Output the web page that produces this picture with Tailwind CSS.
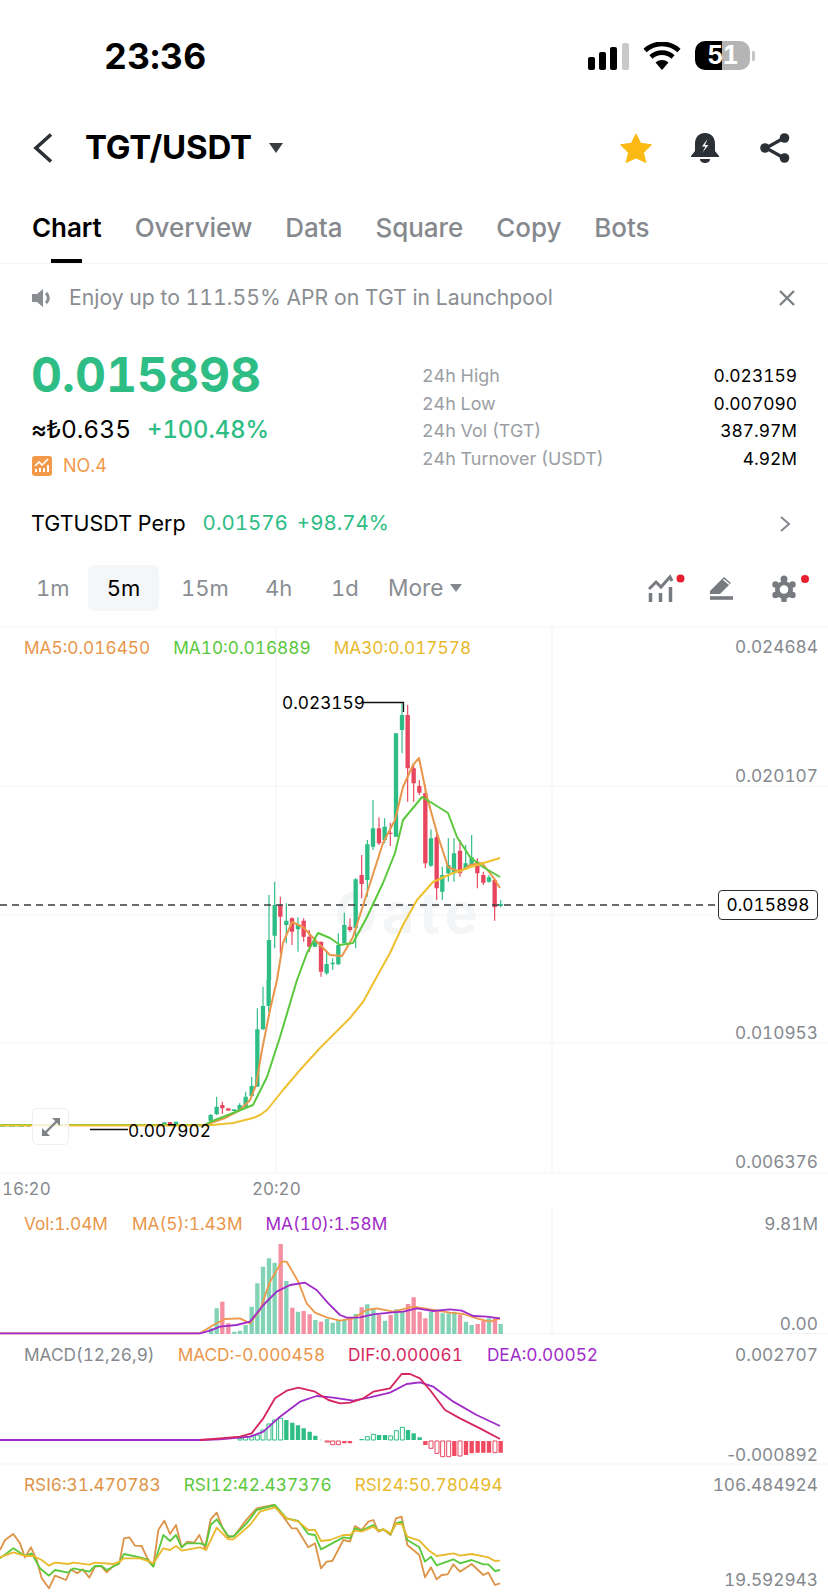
<!DOCTYPE html>
<html lang="en">
<head>
<meta charset="utf-8">
<title>TGT/USDT</title>
<script src="https://cdn.jsdelivr.net/npm/@tailwindcss/browser@4"></script>
</head>
<body class="bg-white">
<div class="w-[828px] h-[1592px] overflow-hidden bg-white font-['Inter','Noto_Sans',sans-serif] text-black tabular-nums">

  <!-- status bar -->
  <div class="h-[100px] flex items-start pt-[36px] relative">
    <span class="ml-[104px] text-[35.500px] leading-[41px] font-bold tracking-[0.2px]">23:36</span>
    <svg class="ml-auto mt-[7px]" width="42" height="27" viewBox="0 0 42 27"><rect x="0" y="14" width="7" height="13" rx="2"/><rect x="11" y="9" width="7" height="18" rx="2"/><rect x="22" y="4" width="7" height="23" rx="2"/><rect x="34" y="0" width="7" height="27" rx="2" fill="#c9c9c9"/></svg>
    <svg class="ml-[13px] mt-[6px]" width="38" height="28" viewBox="0 0 38 28"><path d="M19 28 12.500 20.500A10 10 0 0 1 25.500 20.500Z"/><path d="M8 15A16 16 0 0 1 30 15M2 8.500A25 25 0 0 1 36 8.500" fill="none" stroke="#000" stroke-width="4.600"/></svg>
    <div class="ml-[14px] mt-[5px] w-[55px] h-[29px] rounded-[10px] overflow-hidden flex relative">
      <div class="w-[27px] bg-black"></div><div class="flex-1 bg-[#b5b5b5]"></div>
      <span class="absolute inset-0 flex items-center justify-center text-white text-[25px] font-bold leading-none tracking-[-1px]">51</span>
    </div>
    <div class="ml-[2px] mr-[73px] mt-[15px] w-[3px] h-[10px] rounded-r-[2px] bg-[#c4c4c4]"></div>
  </div>

  <!-- header -->
  <div class="h-[95px] flex items-center pl-[33px] pr-[38px]">
    <svg width="20" height="30" viewBox="0 0 20 30"><path d="M18 1.500 3 15l15 13.500" fill="none" stroke="#2b2f36" stroke-width="3.600"/></svg>
    <span class="ml-[32px] text-[33px] font-bold leading-none tracking-[-0.2px]">TGT/USDT</span>
    <svg class="ml-[17px]" width="14" height="10" viewBox="0 0 14 10"><path d="M0 0h14L7 10Z" fill="#3a3d42"/></svg>
    <svg class="ml-auto" width="32" height="30" viewBox="0 0 34 31"><path d="M17 0.500 22 10.500 33.500 12 25 20.500 27.500 31 17 26 6.500 31 9 20.500 0.500 12 12 10.500Z" fill="#fcb813" stroke="#fcb813" stroke-linejoin="round"/></svg>
    <svg class="ml-[39px]" width="28" height="30" viewBox="0 0 28 30"><path d="M14 0C7 0 4 5 4 11V18L0 23V24H28V23L24 18V11C24 5 21 0 14 0Z" fill="#2b2f36"/><path d="M9 26H19C19 29 16 30 14 30 12 30 9 29 9 26Z" fill="#2b2f36"/><path d="M16.500 6 11 13.500H14.500L11.500 19.500 17.500 12H14Z" fill="#fff"/></svg>
    <svg class="ml-[41px]" width="30" height="30" viewBox="0 0 30 30"><path d="M24 5 6 15 24 25" fill="none" stroke="#2b2f36" stroke-width="3.200"/><circle cx="24.500" cy="5" r="4.800" fill="#2b2f36"/><circle cx="5" cy="15" r="4.800" fill="#2b2f36"/><circle cx="24.500" cy="25" r="4.800" fill="#2b2f36"/></svg>
  </div>

  <!-- tabs -->
  <div class="h-[69px] border-b border-[#f3f4f5] pl-[32px] flex gap-[33px] items-start pt-[16px] text-[26px] leading-[34px] text-[#85898e] font-medium tracking-[-0.05px]">
    <div class="relative text-black font-semibold">Chart<div class="absolute left-[19px] top-[48px] w-[31px] h-[4px] bg-black"></div></div>
    <span>Overview</span><span>Data</span><span>Square</span><span>Copy</span><span>Bots</span>
  </div>

  <!-- banner -->
  <div class="h-[68px] flex items-center pl-[32px] pr-[33px] text-[#8a8e93]">
    <svg width="20" height="18" viewBox="0 0 20 18"><path d="M0 5h5l6-5v18l-6-5H0Z" fill="#8a8e93"/><path d="M14 4a6.500 6.500 0 0 1 0 10" fill="none" stroke="#8a8e93" stroke-width="3"/></svg>
    <span class="ml-[17px] text-[21.200px] leading-none">Enjoy up to 111.55% APR on TGT in Launchpool</span>
    <svg class="ml-auto" width="16" height="16" viewBox="0 0 16 16"><path d="M1 1 15 15M15 1 1 15" stroke="#7d8185" stroke-width="2.400"/></svg>
  </div>

  <!-- price block -->
  <div class="h-[167px] flex pl-[31px] pr-[31px] pt-[18px]">
    <div class="w-[391px]">
      <div class="text-[48px] leading-[50px] font-bold text-[#2ebd85]">0.015898</div>
      <div class="mt-[14px] flex items-baseline text-[24.500px] leading-[30px]"><span class="font-['Noto_Sans','Inter',sans-serif] font-medium">≈₺<span class="font-['Inter',sans-serif] font-normal">0.635</span></span><span class="ml-[16px] text-[23.700px] text-[#2ebd85] font-medium">+100.48%</span></div>
      <div class="mt-[11px] flex items-center">
        <svg class="ml-[1px]" width="20" height="20" viewBox="0 0 20 20"><rect width="20" height="20" rx="3" fill="#f2994a"/><path d="M3 10 7 6l3 3 6-6" fill="none" stroke="#fff" stroke-width="1.600"/><path d="M4 16v-3M8 16v-4M12 16v-4M16 16V9" stroke="#fff" stroke-width="2"/></svg>
        <span class="ml-[11px] text-[18px] leading-none text-[#f2994a]">NO.4</span>
      </div>
    </div>
    <div class="flex-1 pt-[12px] text-[17.900px] leading-[27.700px] text-[#9a9ea3]">
      <div class="flex justify-between"><span>24h High</span><span class="text-black text-[17.400px]">0.023159</span></div>
      <div class="flex justify-between"><span>24h Low</span><span class="text-black text-[17.400px]">0.007090</span></div>
      <div class="flex justify-between"><span>24h Vol (TGT)</span><span class="text-black text-[17.400px]">387.97M</span></div>
      <div class="flex justify-between"><span>24h Turnover (USDT)</span><span class="text-black text-[17.400px]">4.92M</span></div>
    </div>
  </div>

  <!-- perp -->
  <div class="h-[49px] flex items-center pl-[31px] pr-[37px] text-[21.500px]">
    <span>TGTUSDT Perp</span>
    <span class="ml-[17px] text-[20.500px] text-[#2ebd85]">0.01576</span>
    <span class="ml-[9px] text-[20.500px] text-[#2ebd85]">+98.74%</span>
    <svg class="ml-auto" width="12" height="18" viewBox="0 0 12 18"><path d="M2 2l8 7-8 7" fill="none" stroke="#85898e" stroke-width="2"/></svg>
  </div>

  <!-- interval row -->
  <div class="h-[46px] mt-[17px] flex items-center pl-[36px] text-[22px] text-[#8a8e93]">
    <span class="w-[52px]">1m</span>
    <span class="w-[71px] h-[46px] flex items-center justify-center rounded-[6px] bg-[#f5f6f7] text-black">5m</span>
    <span class="ml-[22px] w-[84px]">15m</span>
    <span class="w-[66px]">4h</span>
    <span class="w-[57px]">1d</span>
    <span class="text-[22.700px]">More</span>
    <svg class="ml-[6px]" width="12" height="8" viewBox="0 0 12 8"><path d="M0 0h12L6 8Z" fill="#85898e"/></svg>
    <svg class="ml-[186px]" width="40" height="28" viewBox="0 0 40 28"><path d="M1 15 8 8l5 5 9-10 2 4" fill="none" stroke="#777b80" stroke-width="3"/><path d="M2.500 19v9M12.500 19v9M22.500 13v15" stroke="#777b80" stroke-width="3.500"/><circle cx="32.500" cy="4.500" r="4" fill="#e51f2e"/></svg>
    <svg class="ml-[21px]" width="26" height="24" viewBox="0 0 26 24"><path d="M1 15 15 1l7 6-11 11H1Z" fill="#777b80"/><path d="M14.500 3.500l6 5" stroke="#fff" stroke-width="1.500"/><path d="M1 22h23" stroke="#777b80" stroke-width="3.600"/></svg>
    <svg class="ml-[37px]" width="41" height="28" viewBox="0 0 41 28"><g fill="#777b80"><circle cx="12" cy="16" r="9"/><circle cx="12" cy="5" r="3.500"/><circle cx="12" cy="26" r="2.800"/><circle cx="3.500" cy="10.500" r="3.200"/><circle cx="20.500" cy="10.500" r="3.200"/><circle cx="3.500" cy="21" r="3.200"/><circle cx="20.500" cy="21" r="3.200"/></g><circle cx="12" cy="15.500" r="4.300" fill="#fff"/><circle cx="33" cy="5" r="4" fill="#e51f2e"/></svg>
  </div>

  <!-- main chart : y 626..1210 -->
  <div class="relative h-[584px] mt-[15px]">
    <svg class="absolute inset-0" width="828" height="584" viewBox="0 626 828 584">
      <path d="M0 627H828M0 786H828M0 915H716M0 1043H828M0 1173H828M552 626V1173M276 626V1173" stroke="#f8f8f9" stroke-width="1.500" fill="none"/>
      <text x="335" y="933" font-family="Inter" font-weight="700" font-size="56" letter-spacing="5" fill="#f4f5f6">Gate</text>
      <!-- candles upper -->
      <g transform="translate(240 680) scale(.33333)" fill="none">
        <path stroke="#2ebd85" stroke-width="3.500" d="M87 645V900M104 605V805M139 670V790M174 712V815M225 770V800M260 815V885M278 835V870M295 760V855M313 698V790M347 595V805M382 480V650M399 360V510M434 415V490M468 160V470M486 70V220M573 448V560M607 560V660M625 475V605M642 475V605M677 495V570M695 465V555M747 585V608M782 660V682"/>
        <path stroke="#2ebd85" stroke-width="13" d="M87 780V900M104 675V767M139 722V735M174 735V748M225 780V800M260 852V880M278 848V853M295 795V853M313 735V790M347 598V743M382 493V600M399 445V500M434 440V480M468 160V470M486 105V150M573 475V557M607 585V635M625 555V580M642 520V580M677 550V565M695 532V555M747 592V605M782 672V678"/>
        <path stroke="#e8465f" stroke-width="3.500" d="M121 650V820M156 712V795M191 715V785M208 750V815M243 785V890M330 715V755M365 525V655M417 412V495M451 428V498M503 75V365M521 255V365M538 300V345M556 315V565M590 460V660M660 480V590M712 535V625M730 575V615M764 595V722"/>
        <path stroke="#e8465f" stroke-width="13" d="M121 675V710M156 715V755M191 722V770M208 770V800M243 785V875M330 740V750M365 585V612M417 445V490M451 458V462M503 105V265M521 265V310M538 318V338M556 340V550M590 472V625M660 512V580M712 545V580M730 585V608M764 600V682"/>
      </g>
      <!-- candles lower -->
      <g transform="translate(0 980) scale(.33333)" fill="none">
        <path stroke="#2ebd85" stroke-width="3.500" d="M806 0V95M789 20V150M772 85V320M755 290V350M737 335V382M719 370V392M650 350V405M632 402V425"/>
        <path stroke="#2ebd85" stroke-width="13" d="M806 0V78M789 78V148M772 148V320M755 318V348M737 350V380M719 375V392M702 388V393M650 380V403M632 405V422M528 425V434M493 427V434"/>
        <path stroke="#e8465f" stroke-width="3.500" d="M667 365V402"/>
        <path stroke="#e8465f" stroke-width="13" d="M667 375V385M685 385V392M510 426V434"/>
      </g>
      <!-- dashed price -->
      <path d="M0 905H717" stroke="#3a3d42" stroke-width="1.300" stroke-dasharray="7 5"/>
      <!-- flat-run noise -->
      <path d="M0 1125.500H30" stroke="#2ebd85" stroke-width="2.500" stroke-dasharray="6 3"/>
      <path d="M14 1125H32" stroke="#e8465f" stroke-width="1.500" stroke-dasharray="5 6"/>
      <!-- MAs -->
      <path fill="none" stroke="#e9964a" stroke-width="2" stroke-linejoin="round" d="M0 1125H205L225 1118 240 1110 250 1100 256 1085 262 1050 270 1010 277 980 283 943 292 922 303 927 317 942 330 955 342 956 353 937 367 893 383 843 395 820 403 787 413 765 419 758 427 797 437 833 448 867 460 872 470 865 482 863 493 877 500 888"/>
      <path fill="none" stroke="#5ac83c" stroke-width="2" stroke-linejoin="round" d="M0 1125H205L210 1122 233 1113 253 1105 267 1077 280 1037 297 980 307 953 318 933 330 938 340 945 353 943 367 917 383 883 395 853 403 820 413 808 422 797 432 803 448 813 457 837 470 857 483 867 500 877"/>
      <path fill="none" stroke="#efc02f" stroke-width="2" stroke-linejoin="round" d="M0 1125.500H207L233 1123 253 1118 260 1115 267 1110 283 1090 300 1070 320 1048 350 1018 363 1002 375 980 390 953 403 925 417 900 433 882 453 873 477 865 500 858"/>
      <!-- high/low markers -->
      <path d="M363 702.500H403.500V712" fill="none" stroke="#111" stroke-width="1.300"/>
      <path d="M90 1129.500H128" stroke="#111" stroke-width="1.300"/>
    </svg>

    <!-- legend -->
    <div class="relative flex pl-[24px] pt-[10px] text-[17.250px] leading-[24px] gap-[23px]">
      <span class="text-[#e9964a]">MA5:0.016450</span><span class="text-[#5ac83c]">MA10:0.016889</span><span class="text-[#e7b92c]">MA30:0.017578</span>
    </div>

    <!-- y axis -->
    <div class="absolute right-[10px] top-[9px] h-[539px] flex flex-col justify-between items-end text-[17.250px] leading-[24px] text-[#85898e]">
      <span>0.024684</span><span>0.020107</span>
      <span class="w-[100px] h-[30px] -my-[3px] border border-[#2b2f36] rounded-[4px] bg-white text-black flex items-center justify-center">0.015898</span>
      <span>0.010953</span><span>0.006376</span>
    </div>

    <!-- high/low labels -->
    <span class="absolute left-[282px] top-[65px] text-[17.250px] leading-[24px] text-black">0.023159</span>
    <span class="absolute left-[128px] top-[493px] text-[17.250px] leading-[24px] text-black">0.007902</span>

    <!-- expand -->
    <div class="absolute left-[32px] top-[482px] w-[37px] h-[37px] rounded-[5px] border border-[#eeeff0] bg-white/80 flex items-center justify-center">
      <svg width="20" height="20" viewBox="0 0 20 20"><path d="M3 17 17 3" stroke="#7f8387" stroke-width="2.400"/><path d="M11 1h8v8ZM1 11v8h8Z" fill="#7f8387"/></svg>
    </div>

    <!-- time axis -->
    <span class="absolute left-[2px] top-[551px] text-[17px] leading-[24px] text-[#85898e]">16:20</span>
    <span class="absolute left-[252px] top-[551px] text-[17px] leading-[24px] text-[#85898e]">20:20</span>
  </div>

  <!-- volume : y 1210..1340 -->
  <div class="relative h-[130px]">
    <svg class="absolute inset-0" width="828" height="130" viewBox="0 1210 828 130">
      <path d="M0 1333.500H828M552 1210V1333" stroke="#f3f4f5" stroke-width="1.200"/>
      <g transform="translate(200 1210) scale(.33333)" fill="none">
        <path stroke="#82d3b5" stroke-width="13" d="M33 355V372M50 295V372M103 365V372M120 362V372M137 345V372M155 290V372M172 220V372M189 170V372M207 145V372M224 158V372M259 213V372M294 305V372M346 330V372M381 327V372M398 338V372M415 330V372M433 330V372M467 312V372M502 283V372M520 295V372M555 332V372M589 298V372M607 302V372M693 305V372M728 310V372M746 310V372M763 305V372M798 335V372M815 345V372M867 325V372M902 342V372"/>
        <path stroke="#f490a1" stroke-width="13" d="M67 275V372M85 340V372M242 102V372M277 293V372M311 303V372M329 313V372M363 335V372M450 325V372M485 292V372M537 315V372M572 315V372M624 282V372M641 262V372M659 305V372M676 325V372M711 305V372M780 315V372M833 342V372M850 332V372M885 325V372"/>
        <path stroke="#ee9a4d" stroke-width="5.500" stroke-linejoin="round" d="M-600 370H0L40 345 75 327 120 325 150 340 180 300 210 215 245 155 260 155 295 215 320 280 345 308 380 322 420 332 460 325 500 300 530 295 580 305 640 290 700 300 750 308 790 312 830 325 870 335 900 325"/>
        <path stroke="#a12bc8" stroke-width="5.500" stroke-linejoin="round" d="M-600 370H0L30 362 60 350 110 345 150 335 190 285 230 245 270 225 315 218 350 240 385 280 420 315 440 323 480 322 520 313 570 308 610 305 650 295 700 303 750 298 785 302 820 318 860 320 900 325"/>
      </g>
    </svg>
    <div class="relative flex pl-[24px] pt-[2px] text-[17.250px] leading-[24px]">
      <span class="text-[#e9964a]">Vol:1.04M</span><span class="ml-[24px] text-[#e9964a]">MA(5):1.43M</span><span class="ml-[23px] text-[#a12bc8]">MA(10):1.58M</span>
    </div>
    <span class="absolute right-[10px] top-[2px] text-[17.250px] leading-[24px] text-[#85898e]">9.81M</span>
    <span class="absolute right-[10px] top-[102px] text-[17.250px] leading-[24px] text-[#85898e]">0.00</span>
  </div>

  <!-- MACD : y 1340..1465 -->
  <div class="relative h-[125px]">
    <svg class="absolute inset-0" width="828" height="125" viewBox="0 1340 828 125">
      <path d="M0 1464H828" stroke="#f3f4f5" stroke-width="1.200"/>
      <g transform="translate(200 1340) scale(.33333)" fill="none">
        <path stroke="#2ebd85" stroke-width="13" d="M259 240V300M277 248V300M294 256V300M311 265V300M329 275V300M346 287V300M485 297V301M537 285V300M555 285V300M624 270V300M641 280V300M659 292V300"/>
        <path stroke="#2ebd85" stroke-width="3" d="M114 295h12v5h-12zM131 292h12v8h-12zM149 290h12v10h-12zM166 285h12v15h-12zM183 270h12v30h-12zM201 252h12v48h-12zM218 240h12v60h-12zM236 235h12v65h-12zM496 290h12v10h-12zM514 283h12v17h-12zM566 288h12v12h-12zM583 272h12v28h-12zM601 262h12v38h-12zM363 299V301"/>
        <path stroke="#f04a63" stroke-width="13" d="M433 303V310M450 303V310M676 303V315M763 303V348M798 303V345M815 303V340M833 303V338M850 303V338M867 303V338M902 303V338"/>
        <path stroke="#e8465f" stroke-width="3" d="M375 303h14v3h-14zM392 303h12v11h-12zM409 303h12v11h-12zM687 303h12v22h-12zM705 303h12v37h-12zM722 303h12v47h-12zM740 303h12v47h-12zM774 303h12v45h-12zM879 303h12v35h-12z"/>
        <path stroke="#a12bc8" stroke-width="5.500" stroke-linejoin="round" d="M-600 300H0L60 298 150 290 190 275 240 230 300 185 350 168 400 173 460 182 510 172 570 158 620 132 660 127 700 140 760 185 830 225 900 258"/>
        <path stroke="#d6265f" stroke-width="5.500" stroke-linejoin="round" d="M0 300 60 295 120 290 155 280 190 235 225 175 260 152 295 143 345 155 385 180 420 190 450 188 490 175 520 155 570 145 605 102 630 102 660 115 690 150 735 210 780 235 840 265 900 297"/>
      </g>
    </svg>
    <div class="relative flex pl-[24px] pt-[3px] text-[17.250px] leading-[24px]">
      <span class="text-[#85898e]">MACD(12,26,9)</span><span class="ml-[23px] text-[#e9964a]">MACD:<span class="normal-nums">-</span>0.000458</span><span class="ml-[23px] text-[#d6265f]">DIF:0.000061</span><span class="ml-[24px] text-[#a12bc8]">DEA:0.00052</span>
    </div>
    <span class="absolute right-[10px] top-[3px] text-[17.250px] leading-[24px] text-[#85898e]">0.002707</span>
    <span class="absolute right-[10px] top-[103px] text-[17.250px] leading-[24px] text-[#85898e]"><span class="normal-nums">-</span>0.000892</span>
  </div>

  <!-- RSI : y 1465..1592 -->
  <div class="relative h-[127px]">
    <svg class="absolute inset-0" width="828" height="127" viewBox="0 1465 828 127">
      <g transform="translate(0 1460) scale(.33333)" fill="none" stroke-width="5.500" stroke-linejoin="round">
        <path stroke="#dd9448" d="M0 270 15 240 40 222 60 250 75 292 93 262 110 300 125 355 147 385 165 347 198 360 212 328 232 340 248 328 268 353 285 320 303 318 320 337 340 318 358 310 372 235 388 232 405 257 425 258 442 295 460 318 475 210 493 182 510 222 528 195 545 262 562 245 582 248 598 225 615 265 632 178 650 158 668 205 685 232 702 228 720 205 740 178 770 145 820 135 850 170 875 205 890 205 925 262 945 250 963 325 980 305 997 303 1030 240 1050 245 1065 198 1085 210 1105 185 1120 180 1135 215 1150 208 1172 225 1188 175 1205 170 1222 255 1258 285 1275 352 1293 322 1310 358 1325 345 1343 343 1360 313 1380 335 1415 312 1450 345 1465 338 1485 375 1500 370"/>
        <path stroke="#5ac83c" d="M0 295 40 265 75 288 95 280 120 325 147 347 165 330 205 338 220 325 268 335 285 318 305 318 320 330 355 312 372 282 420 292 440 298 460 320 490 225 510 243 528 225 545 262 560 250 600 250 618 255 632 195 650 178 685 228 700 230 740 190 770 150 825 135 860 175 895 183 925 222 945 225 963 268 1030 232 1050 235 1065 205 1085 212 1120 195 1135 212 1150 208 1172 222 1188 190 1205 185 1222 240 1258 262 1275 305 1293 290 1310 316 1360 298 1380 310 1415 300 1450 313 1465 313 1485 333 1500 330"/>
        <path stroke="#e9b92e" d="M0 292 40 277 75 288 100 288 125 300 147 317 165 308 205 312 220 308 268 314 285 308 340 312 358 305 372 295 420 295 440 302 460 310 490 265 510 270 528 258 545 272 600 262 618 270 650 203 685 238 700 238 750 195 780 155 825 142 860 175 895 185 925 210 945 210 963 243 990 240 1030 225 1050 225 1065 212 1085 215 1120 200 1135 212 1150 208 1172 220 1188 192 1205 192 1222 230 1258 242 1285 270 1310 288 1360 280 1380 287 1415 282 1465 292 1485 303 1500 302"/>
      </g>
    </svg>
    <div class="relative flex pl-[24px] pt-[8px] text-[17.250px] leading-[24px]">
      <span class="text-[#dd9448]">RSI6:31.470783</span><span class="ml-[23px] text-[#5ac83c]">RSI12:42.437376</span><span class="ml-[23px] text-[#e7b92c]">RSI24:50.780494</span>
    </div>
    <span class="absolute right-[10px] top-[8px] text-[17.250px] leading-[24px] text-[#85898e]">106.484924</span>
    <span class="absolute right-[10px] top-[107px] text-[17.250px] leading-[16px] text-[#85898e]">19.592943</span>
  </div>
</div>
</body>
</html>
